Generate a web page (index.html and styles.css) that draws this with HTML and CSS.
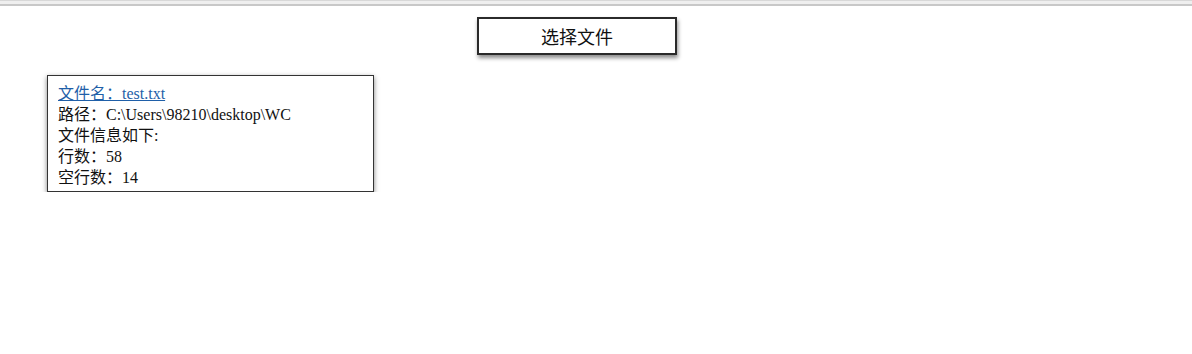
FILE: index.html
```html
<!DOCTYPE html>
<html lang="zh-CN">
<head>
<meta charset="utf-8">
<title>文件信息</title>
<link rel="stylesheet" href="styles.css">
</head>
<body>
<div class="topbar"></div>
<div class="toolbar">
  <button class="pick">选择文件</button>
</div>
<div class="card">
  <a class="name" href="#">文件名：test.txt</a>
  <div class="line">路径：C:\Users\98210\desktop\WC</div>
  <div class="line">文件信息如下:</div>
  <div class="line">行数：58</div>
  <div class="line">空行数：14</div>
</div>
</body>
</html>
```
FILE: styles.css
```css
html, body {
  margin: 0;
  padding: 0;
  background: #fff;
}
body {
  font-family: "Liberation Serif", "Noto Sans CJK SC", serif;
  font-size: 16px;
  color: #111;
}
.topbar {
  height: 6px;
  background: linear-gradient(to bottom, #d8d8d8 0, #d8d8d8 1px, #efefef 1px, #efefef 4px, #c8c8c8 4px, #c8c8c8 6px);
}
.toolbar {
  display: flex;
  padding-top: 11px;
  padding-left: 477px;
}
.pick {
  box-sizing: border-box;
  width: 200px;
  height: 38px;
  border: 2px solid #2a2a2a;
  background: #fff;
  font-family: "Noto Sans CJK SC", "Noto Sans", sans-serif;
  font-size: 18px;
  color: #111;
  box-shadow: 1px 3px 4px rgba(0, 0, 0, 0.45);
  padding: 0;
  cursor: pointer;
}
.card {
  box-sizing: border-box;
  margin-top: 20px;
  margin-left: 47px;
  width: 327px;
  height: 117px;
  border: 1px solid #333;
  box-shadow: 0 2px 5px rgba(0, 0, 0, 0.5);
  padding: 7px 10px 2px;
  line-height: 21px;
}
.name {
  display: inline-block;
  color: #1f5fa8;
  text-decoration: underline;
}
.line {
  white-space: nowrap;
}
```
